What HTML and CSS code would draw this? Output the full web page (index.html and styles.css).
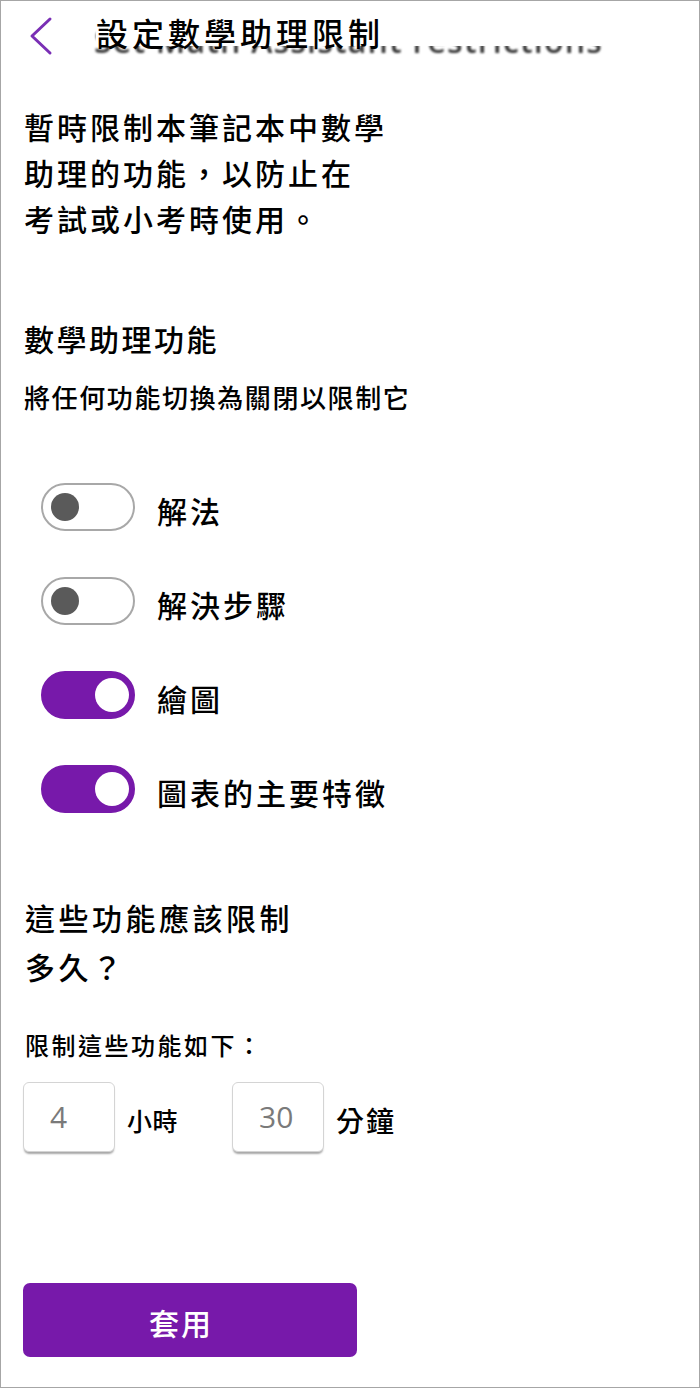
FILE: index.html
```html
<!DOCTYPE html>
<html lang="zh-Hant">
<head>
<meta charset="utf-8">
<title>設定數學助理限制</title>
<link rel="stylesheet" href="styles.css">
</head>
<body>
<div class="page">
  <header class="hdr">
    <svg class="back" width="26" height="40" viewBox="0 0 26 40" aria-hidden="true">
      <path d="M22 3 L4 20 L22 37" fill="none" stroke="#7a2fb5" stroke-width="3" stroke-linecap="round" stroke-linejoin="round"/>
    </svg>
    <div class="title-box">
      <div class="ghost" aria-hidden="true">Set Math Assistant restrictions</div>
      <h1 class="title">設定數學助理限制</h1>
    </div>
  </header>

  <p class="intro">暫時限制本筆記本中數學<br>助理的功能<span class="pn">，</span>以防止在<br>考試或小考時使用<span class="pn">。</span></p>

  <h2 class="sec">數學助理功能</h2>
  <p class="hint">將任何功能切換為關閉以限制它</p>

  <ul class="toggles">
    <li class="row"><span class="sw off"><span class="knob"></span></span><span class="lbl">解法</span></li>
    <li class="row"><span class="sw off"><span class="knob"></span></span><span class="lbl">解決步驟</span></li>
    <li class="row"><span class="sw on"><span class="knob"></span></span><span class="lbl">繪圖</span></li>
    <li class="row"><span class="sw on"><span class="knob"></span></span><span class="lbl">圖表的主要特徵</span></li>
  </ul>

  <h2 class="sec2">這些功能應該限制<br>多久<span class="pn">？</span></h2>
  <p class="hint2">限制這些功能如下<span class="pn">：</span></p>

  <div class="dur">
    <div class="num">4</div>
    <span class="unit u1">小時</span>
    <div class="num">30</div>
    <span class="unit u2">分鐘</span>
  </div>

  <button class="apply">套用</button>
</div>
</body>
</html>
```

FILE: styles.css
```css
* { box-sizing: border-box; }

html, body {
  margin: 0;
  padding: 0;
  background: #ffffff;
}

body {
  font-family: "Noto Sans CJK TC", "Noto Sans", sans-serif;
  font-weight: 500;
  color: #000;
}

.page {
  width: 700px;
  height: 1388px;
  border: 1px solid #a6a6a6;
  background: #fff;
  overflow: hidden;
}

.pn {
  font-family: "Noto Sans CJK SC", "Noto Sans CJK TC", sans-serif;
}

/* header */
.hdr {
  height: 102px;
  padding: 13px 0 0 27px;
  display: flex;
  align-items: flex-start;
}

.back {
  display: block;
  margin-top: 2px;
}

.title-box {
  position: relative;
  margin-left: 42px;
  width: 506px;
  height: 44px;
}

.ghost {
  position: absolute;
  left: -2px;
  top: 9px;
  font-family: "Open Sans", sans-serif;
  font-weight: 600;
  font-size: 32px;
  line-height: 36px;
  letter-spacing: 1.2px;
  color: #3a3a3a;
  white-space: nowrap;
  filter: blur(0.8px);
}

.title {
  position: relative;
  margin: 0;
  height: 32px;
  background: #fff;
  font-size: 32px;
  font-weight: 500;
  line-height: 36px;
  letter-spacing: 4px;
  white-space: nowrap;
}

/* text blocks */
.intro {
  margin: 0 0 0 23px;
  font-size: 30px;
  line-height: 46px;
  letter-spacing: 3px;
}

.sec {
  margin: 77px 0 0 23px;
  font-size: 30px;
  font-weight: 500;
  line-height: 40px;
  letter-spacing: 2.5px;
}

.hint {
  margin: 22px 0 0 23px;
  font-size: 26px;
  line-height: 34px;
  letter-spacing: 1.6px;
}

/* toggles */
.toggles {
  list-style: none;
  margin: 69px 0 0 0;
  padding: 0 0 0 40px;
  display: flex;
  flex-direction: column;
  gap: 46px;
}

.row {
  display: flex;
  align-items: center;
  height: 48px;
}

.sw {
  width: 94px;
  height: 48px;
  border-radius: 24px;
  border: 2px solid #a8a8a8;
  display: flex;
  align-items: center;
  flex-shrink: 0;
}

.sw.off {
  justify-content: flex-start;
  padding-left: 8px;
  background: #fff;
}

.sw.off .knob {
  width: 28px;
  height: 28px;
  border-radius: 50%;
  background: #5a5a5a;
}

.sw.on {
  justify-content: flex-end;
  padding-right: 4px;
  background: #7719aa;
  border-color: #7719aa;
}

.sw.on .knob {
  width: 34px;
  height: 34px;
  border-radius: 50%;
  background: #fff;
}

.lbl {
  margin-left: 22px;
  padding-top: 5px;
  font-size: 30px;
  line-height: 40px;
  letter-spacing: 3px;
  white-space: nowrap;
}

/* duration */
.sec2 {
  margin: 80px 0 0 24px;
  font-size: 30px;
  font-weight: 500;
  line-height: 49px;
  letter-spacing: 3.5px;
}

.hint2 {
  margin: 38px 0 0 24px;
  font-size: 24px;
  line-height: 32px;
  letter-spacing: 2.5px;
}

.dur {
  margin: 21px 0 0 22px;
  display: flex;
  align-items: center;
}

.num {
  width: 92px;
  height: 70px;
  border: 1px solid #d4d4d4;
  border-radius: 6px;
  box-shadow: 0 3px 2px -1px rgba(0, 0, 0, 0.35);
  padding-left: 26px;
  font-family: "Open Sans", sans-serif;
  font-weight: 400;
  font-size: 30px;
  line-height: 68px;
  color: #7a7a7a;
  background: #fff;
}

.unit {
  padding-top: 6px;
  white-space: nowrap;
}

.u1 {
  margin: 0 54px 0 12px;
  font-size: 25px;
  letter-spacing: 0.5px;
}

.u2 {
  margin-left: 12px;
  font-size: 28px;
  letter-spacing: 2px;
}

/* apply button */
.apply {
  display: flex;
  align-items: center;
  justify-content: center;
  margin: 131px 0 0 22px;
  width: 334px;
  height: 74px;
  border: none;
  border-radius: 7px;
  background: #7719aa;
  color: #fff;
  font-family: "Noto Sans CJK TC", sans-serif;
  font-weight: 500;
  font-size: 30px;
  letter-spacing: 2px;
  padding: 4px 18px 0 0;
  cursor: pointer;
}
```
